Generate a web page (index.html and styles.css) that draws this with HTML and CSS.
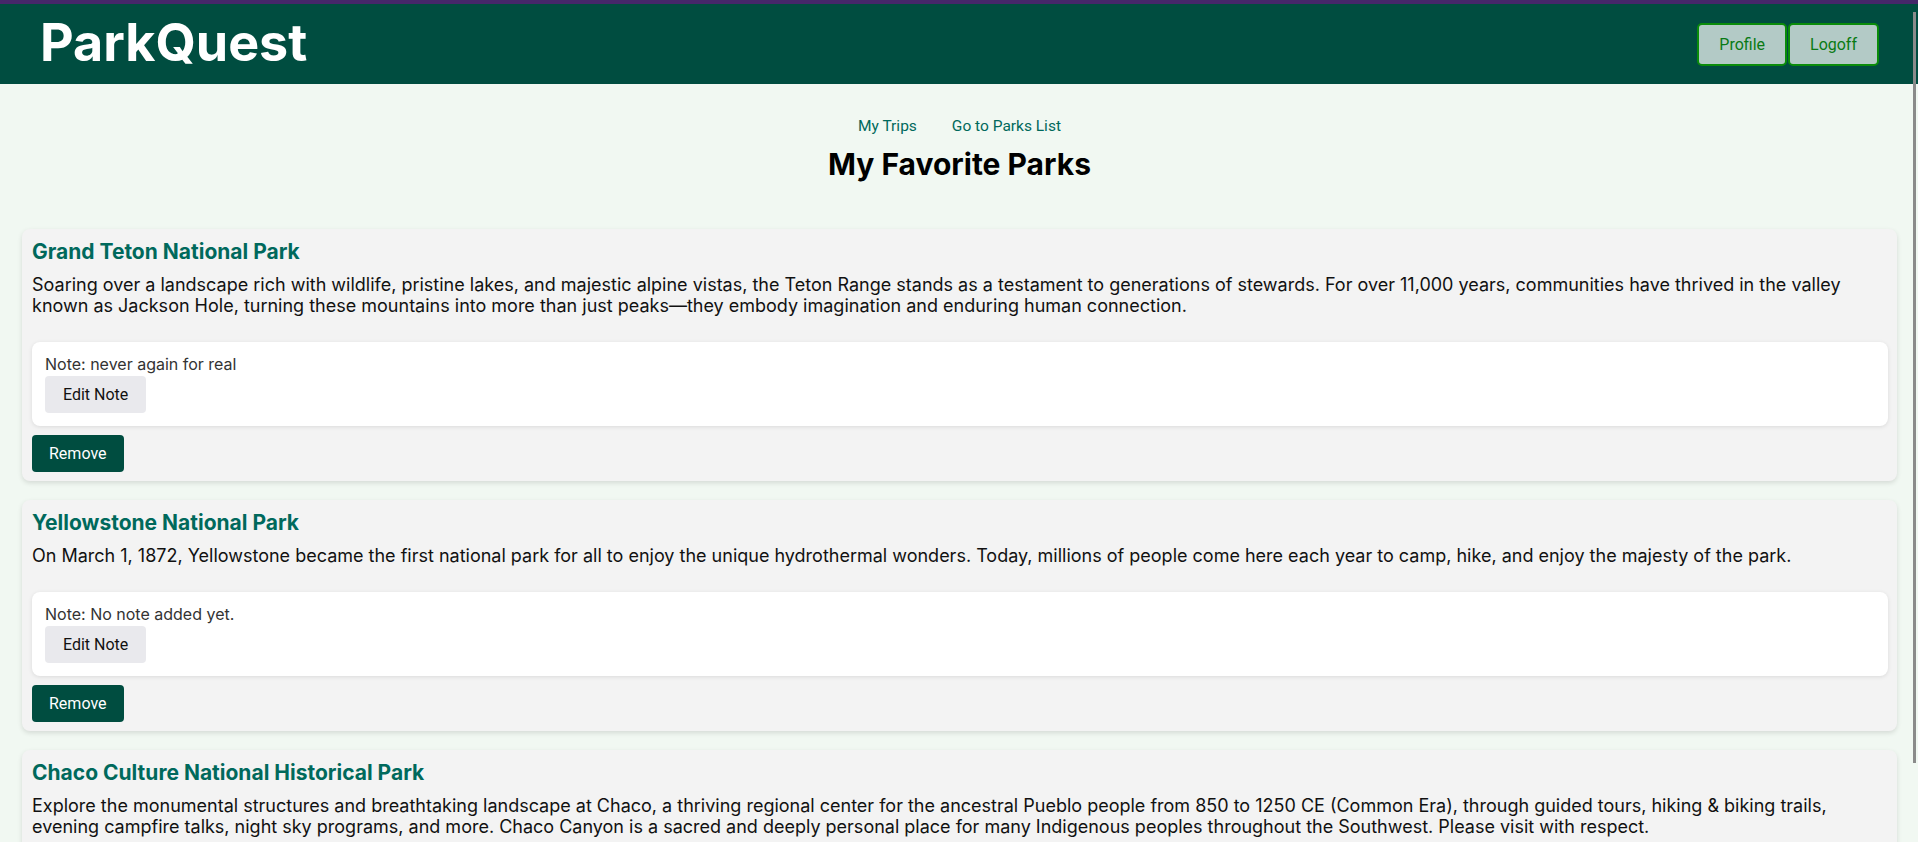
FILE: index.html
```html
<!DOCTYPE html>
<html lang="en">
<head>
<meta charset="utf-8">
<title>ParkQuest - My Favorite Parks</title>
<link rel="stylesheet" href="styles.css">
</head>
<body>
<div class="topstrip"></div>
<header class="site-header">
  <div class="brand">ParkQuest</div>
  <div class="header-actions">
    <button class="hdr-btn">Profile</button>
    <button class="hdr-btn">Logoff</button>
  </div>
</header>
<main class="page">
  <nav class="subnav">
    <a href="#" class="subnav-link">My Trips</a>
    <a href="#" class="subnav-link">Go to Parks List</a>
  </nav>
  <h1 class="page-title">My Favorite Parks</h1>
  <section class="park-list">
    <article class="park-card">
      <h3 class="park-name">Grand Teton National Park</h3>
      <p class="park-desc">Soaring over a landscape rich with wildlife, pristine lakes, and majestic alpine vistas, the Teton Range stands as a testament to generations of stewards. For over 11,000 years, communities have thrived in the valley known as Jackson Hole, turning these mountains into more than just peaks—they embody imagination and enduring human connection.</p>
      <div class="note-box">
        <p class="note-text">Note: never again for real</p>
        <button class="note-btn">Edit Note</button>
      </div>
      <button class="remove-btn">Remove</button>
    </article>
    <article class="park-card">
      <h3 class="park-name">Yellowstone National Park</h3>
      <p class="park-desc">On March 1, 1872, Yellowstone became the first national park for all to enjoy the unique hydrothermal wonders. Today, millions of people come here each year to camp, hike, and enjoy the majesty of the park.</p>
      <div class="note-box">
        <p class="note-text">Note: No note added yet.</p>
        <button class="note-btn">Edit Note</button>
      </div>
      <button class="remove-btn">Remove</button>
    </article>
    <article class="park-card">
      <h3 class="park-name">Chaco Culture National Historical Park</h3>
      <p class="park-desc">Explore the monumental structures and breathtaking landscape at Chaco, a thriving regional center for the ancestral Pueblo people from 850 to 1250 CE (Common Era), through guided tours, hiking &amp; biking trails, evening campfire talks, night sky programs, and more. Chaco Canyon is a sacred and deeply personal place for many Indigenous peoples throughout the Southwest. Please visit with respect.</p>
      <div class="note-box">
        <p class="note-text">Note: No note added yet.</p>
        <button class="note-btn">Edit Note</button>
      </div>
      <button class="remove-btn">Remove</button>
    </article>
  </section>
</main>
<div class="scroll-thumb"></div>
</body>
</html>
```
FILE: styles.css
```css
html {
  scrollbar-width: none;
}
html::-webkit-scrollbar {
  display: none;
}
* {
  box-sizing: border-box;
}
body {
  margin: 0;
  background: #f1f8f2;
  font-family: Inter, "Noto Sans", sans-serif;
  color: #111;
}
.topstrip {
  height: 4px;
  background: #45276a;
}
.site-header {
  height: 80px;
  background: #004d40;
  display: flex;
  align-items: center;
  justify-content: space-between;
  padding: 0 39px 0 40px;
}
.brand {
  color: #fff;
  font-weight: 700;
  font-size: 52px;
  line-height: 1;
  margin-top: -2px;
}
.header-actions {
  display: flex;
  gap: 1px;
  margin-top: 1px;
}
.hdr-btn {
  height: 43px;
  padding: 0 20px;
  background: #b3cac6;
  border: 2px solid #0a8c0a;
  border-radius: 5px;
  color: #0a7a14;
  font-family: Roboto, sans-serif;
  font-size: 16px;
}
.page {
  padding: 0 21px 40px 22px;
}
.subnav {
  display: flex;
  justify-content: center;
  gap: 35px;
  padding-top: 33px;
}
.subnav-link {
  font-family: Roboto, sans-serif;
  font-size: 15.5px;
  color: #00695c;
  text-decoration: none;
}
.page-title {
  margin: 11px 0 0;
  text-align: center;
  font-size: 30px;
  font-weight: 700;
  color: #000;
}
.park-list {
  display: flex;
  flex-direction: column;
  gap: 19px;
  margin-top: 47px;
}
.park-card {
  background: #f3f3f3;
  border-radius: 8px;
  box-shadow: 0 2px 5px rgba(0, 0, 0, 0.12);
  padding: 10px 9px 9px 10px;
}
.park-name {
  margin: 0;
  font-size: 21px;
  font-weight: 700;
  color: #00695c;
}
.park-desc {
  margin: 10px 0 26px;
  font-size: 18px;
  color: #111;
}
.note-box {
  background: #fff;
  border-radius: 8px;
  box-shadow: 0 1px 4px rgba(0, 0, 0, 0.1);
  padding: 12px 13px 13px;
}
.note-text {
  margin: 0;
  font-size: 16px;
  color: #333;
}
.note-btn {
  margin-top: 2px;
  height: 37px;
  padding: 0 18px;
  background: #e9e9ed;
  border: none;
  border-radius: 4px;
  color: #111;
  font-family: Roboto, sans-serif;
  font-size: 16px;
}
.remove-btn {
  display: block;
  margin-top: 9px;
  height: 37px;
  padding: 0 17px;
  background: #004d40;
  border: none;
  border-radius: 4px;
  color: #fff;
  font-family: Roboto, sans-serif;
  font-size: 16px;
}
.scroll-thumb {
  position: fixed;
  top: 12px;
  right: 2px;
  width: 3px;
  height: 751px;
  background: #8b8b8b;
}
```
